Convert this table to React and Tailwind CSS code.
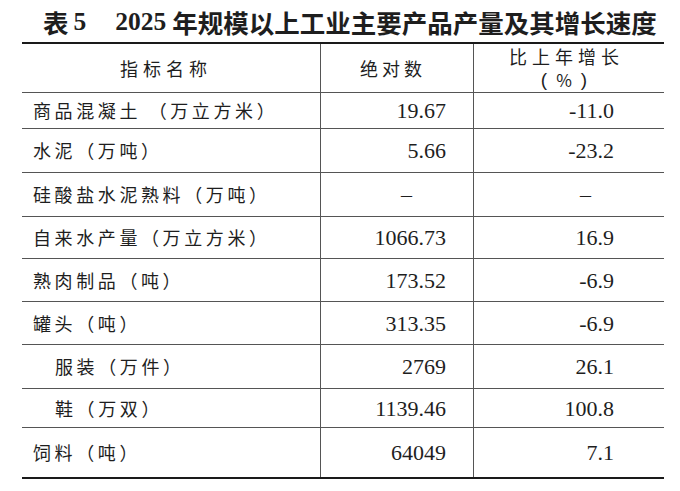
import React from "react";

const rows = [
  { name: "商品混凝土 （万立方米）", a: "19.67", b: "-11.0", h: "h-[36px]" },
  { name: "水泥（万吨）", a: "5.66", b: "-23.2", h: "h-[44px]" },
  { name: "硅酸盐水泥熟料（万吨）", a: "–", b: "–", h: "h-[44px]", dash: true },
  { name: "自来水产量（万立方米）", a: "1066.73", b: "16.9", h: "h-[42px]" },
  { name: "熟肉制品（吨）", a: "173.52", b: "-6.9", h: "h-[43px]" },
  { name: "罐头（吨）", a: "313.35", b: "-6.9", h: "h-[43px]" },
  { name: "服装（万件）", a: "2769", b: "26.1", h: "h-[44px]", indent: true },
  { name: "鞋（万双）", a: "1139.46", b: "100.8", h: "h-[39px]", indent: true },
  { name: "饲料（吨）", a: "64049", b: "7.1", h: "h-[49px]", last: true },
];

export default function App() {
  return (
    <div className="w-[680px] h-[491px] bg-white text-[#1e1e1e] overflow-hidden [text-spacing-trim:space-all]">
      <div className="h-[42px] flex items-center pl-[43px] pt-[2px] text-[25.5px] font-bold whitespace-nowrap font-['Liberation_Serif','Noto_Sans_CJK_SC',serif]">
        <span className="font-['Noto_Sans_CJK_SC',sans-serif]">表</span>
        <span className="ml-[5px]">5</span>
        <span className="ml-[29px]">2025</span>
        <span className="ml-[6px] font-['Noto_Sans_CJK_SC',sans-serif]">
          年规模以上工业主要产品产量及其增长速度
        </span>
      </div>
      <div className="ml-[22px] w-[642px] border-t-2 border-b-2 border-[#1a1a1a] flex flex-col">
        <div className="h-[49px] flex border-b border-[#555] font-['Noto_Sans_CJK_SC',sans-serif] text-[18px]">
          <div className="w-[299px] border-r border-[#555] flex items-center justify-center pr-[10px] tracking-[5px]">
            指标名称
          </div>
          <div className="w-[153px] border-r border-[#555] flex items-center justify-center pr-[8px] tracking-[4px]">
            绝对数
          </div>
          <div className="flex-1 flex flex-col items-center justify-center gap-[4px] pr-[10px] pb-[1px] leading-[19px]">
            <span className="tracking-[5px] pl-[5px]">比上年增长</span>
            <span className="flex items-center gap-[9px] whitespace-nowrap">
              <span className="font-['Liberation_Sans',sans-serif] text-[19px] leading-[19px]">(</span>
              <span className="text-[17px]">%</span>
              <span className="font-['Liberation_Sans',sans-serif] text-[19px] leading-[19px]">)</span>
            </span>
          </div>
        </div>
        {rows.map((r, i) => (
          <div
            key={i}
            className={`${r.h} flex ${r.last ? "" : "border-b border-[#555]"}`}
          >
            <div
              className={`w-[299px] border-r border-[#555] flex items-center ${
                r.indent ? "pl-[33px]" : "pl-[11px]"
              } text-[18px] tracking-[3.6px] whitespace-nowrap font-['Noto_Sans_CJK_SC',sans-serif]`}
            >
              {r.name}
            </div>
            <div
              className={`w-[153px] border-r border-[#555] flex items-center justify-end ${
                r.dash ? "pr-[61px]" : "pr-[27px]"
              } text-[22px] font-['Liberation_Serif',serif]`}
            >
              {r.a}
            </div>
            <div
              className={`flex-1 flex items-center justify-end ${
                r.dash ? "pr-[73px]" : "pr-[50px]"
              } text-[22px] font-['Liberation_Serif',serif]`}
            >
              {r.b}
            </div>
          </div>
        ))}
      </div>
    </div>
  );
}
